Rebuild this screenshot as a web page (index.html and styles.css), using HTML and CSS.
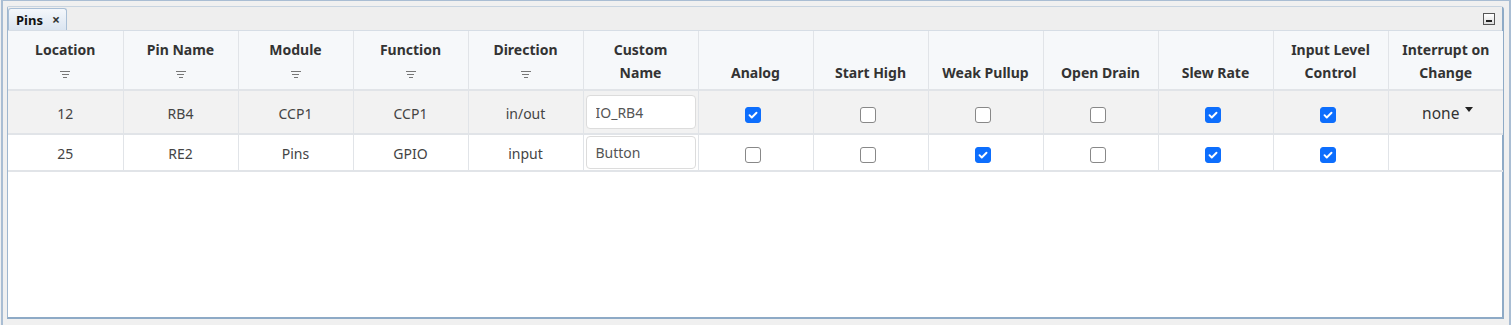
FILE: index.html
```html
<!DOCTYPE html>
<html lang="en">
<head>
    <meta charset="UTF-8">
    <title>Pins</title>
    <link rel="stylesheet" href="styles.css">
</head>
<body>
    <div class="frame">
        <div class="panel">
            <div class="tabbar">
                <div class="tab">Pins <span class="close">&times;</span></div>
                <div class="minimize"><span></span></div>
            </div>
            <table class="pins">
                <thead>
                    <tr>
                        <th>Location<br><span class="filter"><i></i><i></i><i></i></span></th>
                        <th>Pin Name<br><span class="filter"><i></i><i></i><i></i></span></th>
                        <th>Module<br><span class="filter"><i></i><i></i><i></i></span></th>
                        <th>Function<br><span class="filter"><i></i><i></i><i></i></span></th>
                        <th>Direction<br><span class="filter"><i></i><i></i><i></i></span></th>
                        <th>Custom<br>Name</th>
                        <th>Analog</th>
                        <th>Start High</th>
                        <th>Weak Pullup</th>
                        <th>Open Drain</th>
                        <th>Slew Rate</th>
                        <th>Input Level<br>Control</th>
                        <th>Interrupt on<br>Change</th>
                    </tr>
                </thead>
                <tbody>
                    <tr class="row-alt">
                        <td>12</td>
                        <td>RB4</td>
                        <td>CCP1</td>
                        <td>CCP1</td>
                        <td>in/out</td>
                        <td class="name-cell"><input class="name-input" type="text" value="IO_RB4"></td>
                        <td><span class="cb on"><svg viewBox="0 0 16 16"><path d="M4 8.2l2.6 2.6L12 5.4" fill="none" stroke="#fff" stroke-width="2.2" stroke-linecap="round" stroke-linejoin="round"/></svg></span></td>
                        <td><span class="cb"></span></td>
                        <td><span class="cb"></span></td>
                        <td><span class="cb"></span></td>
                        <td><span class="cb on"><svg viewBox="0 0 16 16"><path d="M4 8.2l2.6 2.6L12 5.4" fill="none" stroke="#fff" stroke-width="2.2" stroke-linecap="round" stroke-linejoin="round"/></svg></span></td>
                        <td><span class="cb on"><svg viewBox="0 0 16 16"><path d="M4 8.2l2.6 2.6L12 5.4" fill="none" stroke="#fff" stroke-width="2.2" stroke-linecap="round" stroke-linejoin="round"/></svg></span></td>
                        <td><span class="select">none<span class="caret"></span></span></td>
                    </tr>
                    <tr>
                        <td>25</td>
                        <td>RE2</td>
                        <td>Pins</td>
                        <td>GPIO</td>
                        <td>input</td>
                        <td class="name-cell"><input class="name-input" type="text" value="Button"></td>
                        <td><span class="cb"></span></td>
                        <td><span class="cb"></span></td>
                        <td><span class="cb on"><svg viewBox="0 0 16 16"><path d="M4 8.2l2.6 2.6L12 5.4" fill="none" stroke="#fff" stroke-width="2.2" stroke-linecap="round" stroke-linejoin="round"/></svg></span></td>
                        <td><span class="cb"></span></td>
                        <td><span class="cb on"><svg viewBox="0 0 16 16"><path d="M4 8.2l2.6 2.6L12 5.4" fill="none" stroke="#fff" stroke-width="2.2" stroke-linecap="round" stroke-linejoin="round"/></svg></span></td>
                        <td><span class="cb on"><svg viewBox="0 0 16 16"><path d="M4 8.2l2.6 2.6L12 5.4" fill="none" stroke="#fff" stroke-width="2.2" stroke-linecap="round" stroke-linejoin="round"/></svg></span></td>
                        <td></td>
                    </tr>
                </tbody>
            </table>
        </div>
    </div>
</body>
</html>
```

FILE: styles.css
```css
:root {
    --frame-color: #a9bdd3;
    --panel-border: #8eaac6;
    --grid-line: #e1e4e8;
    --header-bg: #f6f8fa;
    --alt-row: #f2f2f2;
    --text-color: #333;
    --check-blue: #0d6efd;
}

body {
    margin: 0;
    background-color: #f0f0f0;
    font-family: "Noto Sans", "Open Sans", sans-serif;
    color: var(--text-color);
}

.frame {
    height: 325px;
    box-sizing: border-box;
    border-top: 1px solid var(--frame-color);
    border-left: 2px solid var(--frame-color);
    border-right: 2px solid var(--frame-color);
    margin: 0 0 0 1px;
    width: 1510px;
    padding: 5px 5px 0 4px;
}

.panel {
    height: 313px;
    box-sizing: border-box;
    background-color: #fff;
    border: 1px solid var(--panel-border);
    border-top-color: #c8d4e0;
    border-left: 1px solid #9fb6ce;
    border-bottom: 2px solid var(--panel-border);
    border-right: 2px solid var(--panel-border);
    border-radius: 2px 4px 0 0;
}

.tabbar {
    height: 23px;
    display: flex;
    justify-content: space-between;
    align-items: flex-end;
    background-color: #eeeeee;
    border-bottom: 1px solid #d6dde5;
}

.tab {
    height: 21px;
    padding: 0 6px 0 7px;
    display: flex;
    align-items: center;
    gap: 9px;
    font-size: 13px;
    font-weight: bold;
    color: #111;
    background: linear-gradient(#f4f7fb, #dbe5f1);
    border: 1px solid #a9bfd6;
    border-bottom: none;
    border-radius: 3px 3px 0 0;
}

.close {
    font-size: 14px;
    color: #333;
}

.minimize {
    width: 10px;
    height: 10px;
    margin: 0 7px 5px 0;
    border: 1px solid #555;
    background: linear-gradient(#fff, #dcdcdc);
    display: flex;
    align-items: flex-end;
    justify-content: center;
}

.minimize span {
    width: 6px;
    height: 2px;
    background-color: #222;
    margin-bottom: 2px;
}

.pins {
    width: 1495px;
    table-layout: fixed;
    border-collapse: collapse;
    font-size: 14px;
}

.pins th,
.pins td {
    width: 115px;
    text-align: center;
    border-left: 1px solid var(--grid-line);
    border-right: 1px solid var(--grid-line);
    padding: 0 4px;
}

.pins th:first-child,
.pins td:first-child {
    border-left: none;
}

.pins th:last-child,
.pins td:last-child {
    border-right: none;
}

.pins th {
    height: 59px;
    box-sizing: border-box;
    background-color: var(--header-bg);
    font-weight: bold;
    line-height: 23px;
    vertical-align: bottom;
    padding-bottom: 5px;
    border-bottom: 2px solid var(--grid-line);
}

.pins td {
    color: #444;
    padding-top: 2px;
    border-bottom: 2px solid var(--grid-line);
}

.pins tbody tr {
    height: 37px;
}

.pins tbody tr.row-alt {
    height: 44px;
    background-color: var(--alt-row);
}

.filter {
    display: inline-flex;
    flex-direction: column;
    align-items: center;
    gap: 2px;
    vertical-align: middle;
}

.filter i {
    display: block;
    height: 1px;
    background-color: #777;
}

.filter i:nth-child(1) { width: 10px; }
.filter i:nth-child(2) { width: 7px; }
.filter i:nth-child(3) { width: 4px; }

.pins td.name-cell {
    padding: 1px 2px;
}

.name-input {
    width: 100%;
    height: 34px;
    box-sizing: border-box;
    border: 1px solid #dcdcdc;
    border-radius: 4px;
    padding: 0 9px;
    font-family: inherit;
    font-size: 14px;
    color: #555;
    background-color: #fff;
}

tr:not(.row-alt) .name-input {
    height: 33px;
}

.cb {
    display: inline-block;
    width: 14px;
    height: 14px;
    border: 1px solid #888;
    border-radius: 3px;
    background-color: #fff;
    vertical-align: middle;
    margin-right: 6px;
}

.cb.on {
    background-color: var(--check-blue);
    border-color: var(--check-blue);
}

.cb svg {
    display: block;
    width: 14px;
    height: 14px;
}

.select {
    font-size: 15.5px;
    color: #333;
    padding-left: 4px;
}

.caret {
    display: inline-block;
    width: 0;
    height: 0;
    margin-left: 6px;
    border-left: 4px solid transparent;
    border-right: 4px solid transparent;
    border-top: 5px solid #222;
    vertical-align: 7px;
}
```
